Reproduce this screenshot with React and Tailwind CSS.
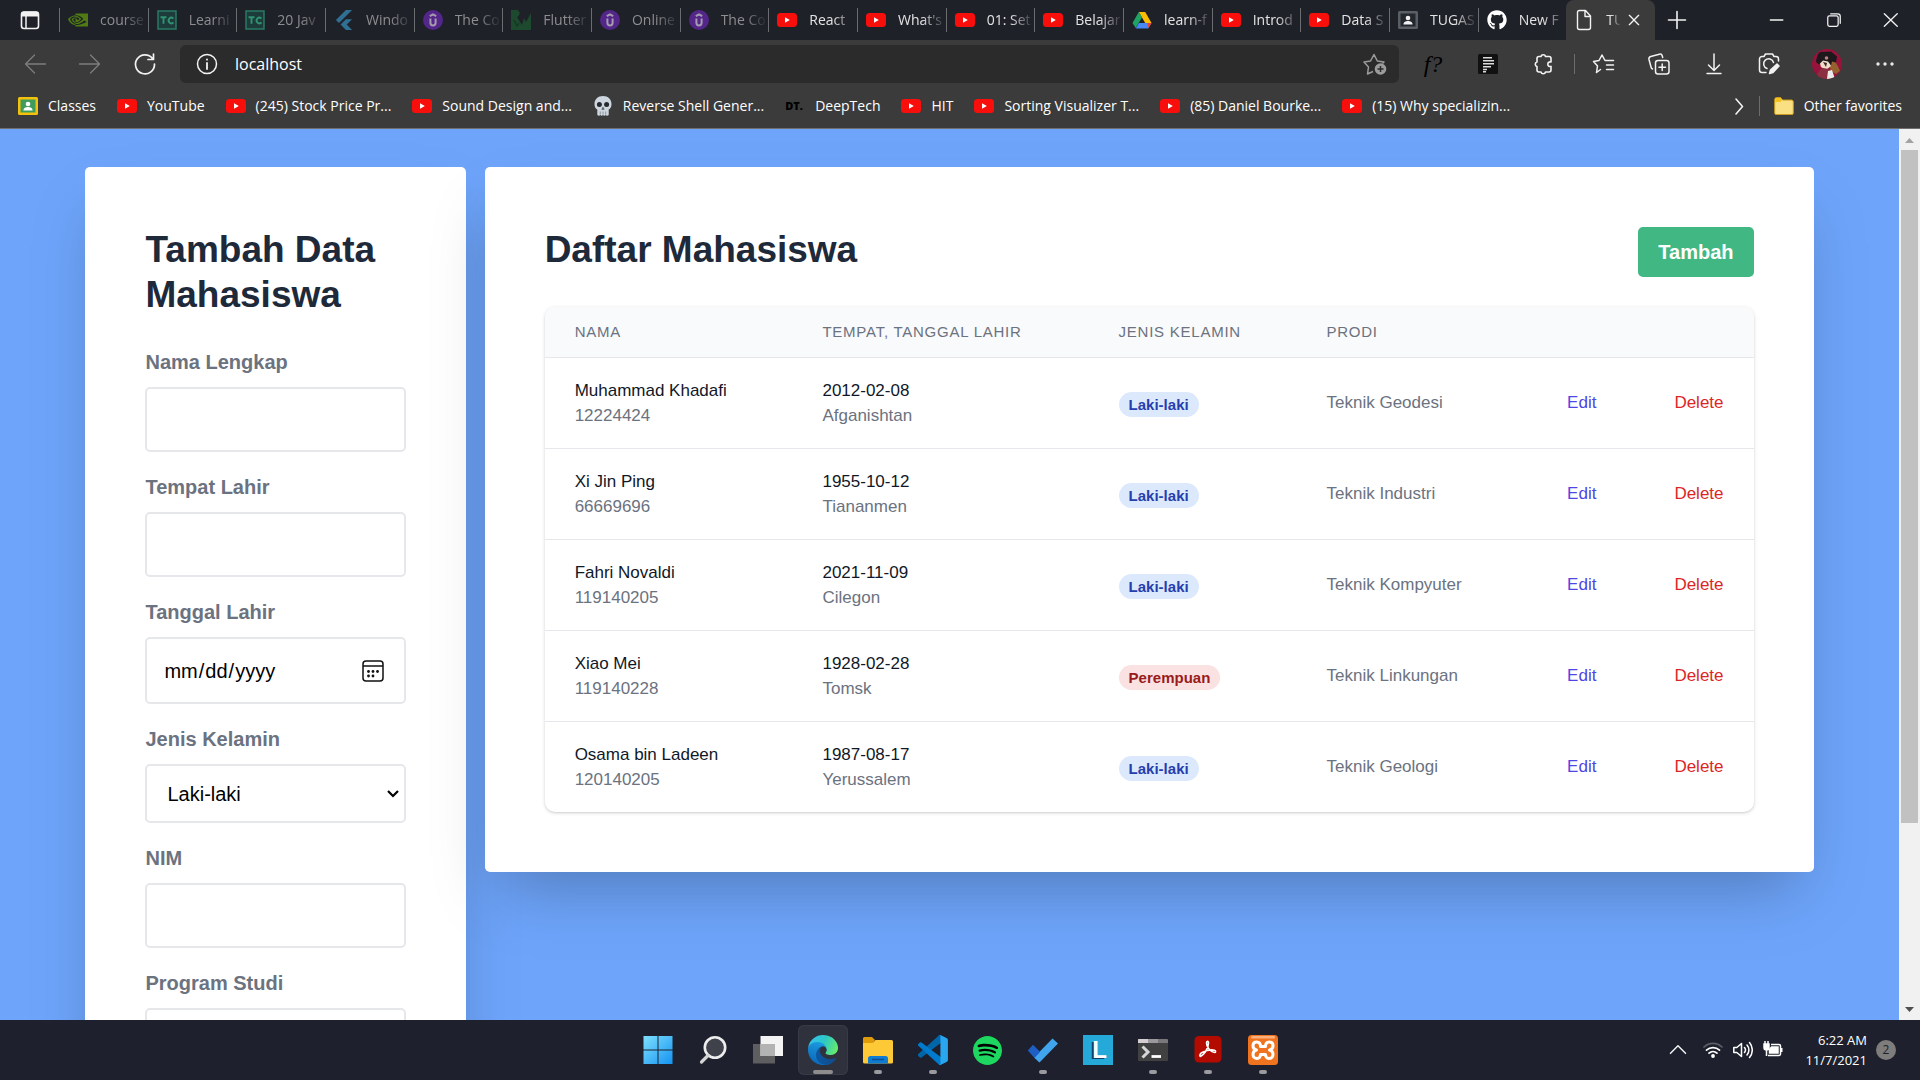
import React from "react";
import { SiNvidia, SiFlutter, SiSpotify } from "react-icons/si";
import { FaGithub } from "react-icons/fa";

/* ---------- small drawings ---------- */

const YouTube = () => (
  <svg viewBox="0 0 20 20" className="size-5 shrink-0">
    <rect x="0" y="3" width="20" height="14" rx="3.5" fill="#f80f0b" />
    <path d="M8 7.2v5.6l4.8-2.8z" fill="#fff" />
  </svg>
);

const TechCourse = () => (
  <svg viewBox="0 0 20 20" className="size-5 shrink-0">
    <rect x="1" y="1" width="18" height="18" fill="#1d3b3a" stroke="#2b8069" strokeWidth="1.4" />
    <path d="M3.5 7.2h6M6.5 7.2v6.6M16.3 8.6a2.6 3 0 1 0 0 3.8" fill="none" stroke="#2f9473" strokeWidth="1.9" />
  </svg>
);

const Udemy = () => (
  <svg viewBox="0 0 20 20" className="size-5 shrink-0">
    <circle cx="10" cy="10" r="10" fill="#54268a" />
    <path d="M6.8 6.2 10 4.3l3.2 1.9M7.4 8.6v4.2a2.6 2.6 0 0 0 5.2 0V8.6" fill="none" stroke="#a39cad" strokeWidth="2" />
  </svg>
);

const Kodeco = () => (
  <svg viewBox="0 0 20 20" className="size-5 shrink-0">
    <path d="M0 0h6c4 1 3 6 0 7l5 8 2-7 2 4 5-9v17H0z" fill="#1d4a2e" />
    <path d="M3 10l3 6 2-3" fill="none" stroke="#173823" strokeWidth="1.4" />
  </svg>
);

const Drive = () => (
  <svg viewBox="0 0 20 18" className="size-5 shrink-0">
    <path d="M6.8 1h6.4l6.3 11h-6.3z" fill="#fbbc04" />
    <path d="M6.8 1 10 6.6 3.7 17 .5 12z" fill="#1ea362" />
    <path d="M6.9 12h12.6l-3.2 5.4H3.7z" fill="#4688f4" />
    <path d="M15 12h4.5l-3 5z" fill="#ea4335" />
  </svg>
);

const Person = ({ frame, back, body }) => (
  <svg viewBox="0 0 20 20" className="size-5 shrink-0">
    <rect x="0" y="1" width="20" height="18" rx="1.5" fill={frame} />
    <rect x="2.5" y="3.5" width="15" height="13" fill={back} />
    <circle cx="10" cy="8" r="2.3" fill={body} />
    <path d="M5.4 14.6c0-2.6 2.4-3.6 4.6-3.6s4.6 1 4.6 3.6z" fill={body} />
  </svg>
);

const Skull = () => (
  <svg viewBox="0 0 20 20" className="size-5 shrink-0">
    <path d="M10 0C4.8 0 1.5 3.4 1.5 8c0 3 1 4.6 2.8 5.6V19c1 1 2.3 1 3 0 .8 1 1.9 1 2.7 0 .8 1 1.9 1 2.7 0 .7 1 2 1 3 0v-5.4c1.800-1 2.800-2.600 2.800-5.600C18.5 3.4 15.2 0 10 0z" fill="#cdd6de" />
    <circle cx="6.4" cy="8.6" r="2.5" fill="#26292e" />
    <circle cx="13.6" cy="8.6" r="2.5" fill="#26292e" />
    <path d="M10 11l-1.2 2.5h2.4zM7.3 15.5v3M10 15.5v3M12.7 15.5v3" fill="#26292e" stroke="#6d757d" strokeWidth=".7" />
  </svg>
);

const Folder = () => (
  <svg viewBox="0 0 20 20" className="size-5 shrink-0">
    <path d="M.7 3.5A2 2 0 0 1 2.7 1.500h3.8l2 2.5h9a1.8 1.8 0 0 1 1.8 1.8v11.4a1.3 1.3 0 0 1-1.3 1.3H2a1.3 1.3 0 0 1-1.3-1.3z" fill="#fbe083" stroke="#c99a1b" strokeWidth="1" />
    <path d="M1.2 3.5a1.5 1.5 0 0 1 1.5-1.5h3.6l1.7 2-1.7 2H1.2z" fill="#f3c31c" />
  </svg>
);

const Line = ({ children, size = "size-6", color = "#f2f2f2", w = 1.3 }) => (
  <svg viewBox="0 0 24 24" className={`${size} shrink-0`} fill="none" stroke={color} strokeWidth={w} strokeLinecap="round" strokeLinejoin="round">
    {children}
  </svg>
);

/* ---------- browser: tab strip ---------- */

const tabs = [
  { t: "course", icon: <SiNvidia className="size-5 shrink-0 text-[#4f7a14]" />, asleep: true },
  { t: "Learni", icon: <TechCourse />, asleep: true },
  { t: "20 Jav", icon: <TechCourse />, asleep: true },
  { t: "Windo", icon: <SiFlutter className="size-5 shrink-0 text-[#2f6f93]" />, asleep: true },
  { t: "The Co", icon: <Udemy />, asleep: true },
  { t: "Flutter", icon: <Kodeco />, asleep: true },
  { t: "Online", icon: <Udemy />, asleep: true },
  { t: "The Co", icon: <Udemy />, asleep: true },
  { t: "React", icon: <YouTube /> },
  { t: "What's", icon: <YouTube /> },
  { t: "01: Set", icon: <YouTube /> },
  { t: "Belajar", icon: <YouTube /> },
  { t: "learn-f", icon: <Drive /> },
  { t: "Introd", icon: <YouTube /> },
  { t: "Data S", icon: <YouTube /> },
  { t: "TUGAS", icon: <Person frame="#5a5f66" back="#23272e" body="#f0f0f0" /> },
  { t: "New F", icon: <FaGithub className="size-5 shrink-0 text-white" /> },
];

function TabStrip() {
  return (
    <div className="flex h-10 shrink-0 items-center bg-[#1e2128] text-[14px] leading-5 text-[#e4e4e4]">
      <button aria-label="Tab actions" className="flex w-[59px] shrink-0 justify-center">
        <svg viewBox="0 0 20 20" className="size-5">
          <rect x="1.5" y="2" width="17" height="16.5" rx="2.5" fill="none" stroke="#f2f2f2" strokeWidth="1.6" />
          <path d="M1.5 4a2.5 2 0 0 1 2.5-2.5h12a2.5 2 0 0 1 2.5 2.5v2.5h-17z" fill="#f2f2f2" />
          <path d="M6 6v12" stroke="#f2f2f2" strokeWidth="1.5" />
        </svg>
      </button>
      <div role="tablist" className="grid h-full min-w-0 flex-[1596] grid-cols-18 items-center">
        {tabs.map((tab, i) => (
          <button role="tab" key={i} className="flex h-6 min-w-0 items-center gap-3 border-l border-[#6a6c70] pl-2">
            {tab.icon}
            <span
              className={`min-w-0 flex-1 overflow-hidden text-left whitespace-nowrap [mask-image:linear-gradient(to_right,black_50%,transparent)] ${
                tab.asleep ? "text-[#8d8e90]" : ""
              }`}
            >
              {tab.t}
            </span>
          </button>
        ))}
        <div role="tab" aria-selected="true" className="flex h-full min-w-0 items-center rounded-t-lg bg-[#3b3b3b] pl-1.5">
          <Line size="size-6" w={1.4}>
            <path d="M5.5 4.5a2 2 0 0 1 2-2h6l5 5.5v11.5a2 2 0 0 1-2 2h-9a2 2 0 0 1-2-2zM13 2.5v6h5.5" />
          </Line>
          <span className="ml-2.5 w-5 overflow-hidden [mask-image:linear-gradient(to_right,black_25%,transparent_75%)]">TU</span>
          <button aria-label="Close tab">
            <Line size="size-4" w={2}><path d="M5 5l14 14M19 5 5 19" /></Line>
          </button>
        </div>
      </div>
      <div className="flex min-w-0 flex-[265] items-center">
        <button aria-label="New tab" className="ml-2.5">
          <Line size="size-6" w={1.6}><path d="M3.5 12h17M12 3.5v17" /></Line>
        </button>
        <div className="ml-auto flex items-center gap-[37px] pr-[19px]">
          <button aria-label="Minimize"><Line size="size-5" w={1.6}><path d="M4 12h15" /></Line></button>
          <button aria-label="Restore">
            <Line size="size-5" w={1.5}>
              <rect x="4.5" y="7" width="12.5" height="12.5" rx="2" />
              <path d="M8 4.5h8.5a3 3 0 0 1 3 3V16" />
            </Line>
          </button>
          <button aria-label="Close"><Line size="size-5" w={1.6}><path d="M4 4.5l15.5 15M19.5 4.5 4 19.5" /></Line></button>
        </div>
      </div>
    </div>
  );
}

/* ---------- browser: address row ---------- */

function Avatar() {
  return (
    <svg viewBox="0 0 30 30" className="size-[30px]">
      <defs><clipPath id="face"><circle cx="15" cy="15" r="15" /></clipPath></defs>
      <g clipPath="url(#face)">
        <rect width="30" height="30" fill="#97133c" />
        <path d="M19 10c4 1 6 5 9 12l-4 3-5-3-3-9z" fill="#96602f" />
        <path d="M7 11l10-1 2 7-5 4-5-3z" fill="#f1dccb" />
        <path d="M4 13C5 6 7 2 11 3l8-.5 6 5-1 6-4-1-1 4-3-4-5-1-4 4z" fill="#1c181c" />
        <path d="M11 13l4 1-1 4z" fill="#3a2826" />
        <circle cx="14.5" cy="9" r="1.800" fill="#c08087" />
        <path d="M5 30c0-6 2-9 6-11l6 1 4 10z" fill="#8a3040" />
        <path d="M16 22l4-1 3 9h-8z" fill="#ecebea" />
      </g>
    </svg>
  );
}

function AddressRow() {
  return (
    <div className="flex h-12 items-center">
      <div className="flex w-[180px] shrink-0 items-center gap-[31px] pl-[23px]">
        <button aria-label="Back"><Line color="#7d7d7d"><path d="M2.5 12h20M11.5 3 2.5 12l9 9" /></Line></button>
        <button aria-label="Forward"><Line color="#7d7d7d"><path d="M1.5 12h20M12.5 3l9 9-9 9" /></Line></button>
        <button aria-label="Reload"><Line w={1.7}><path d="M19.5 6.5A9.5 9.5 0 1 0 21.5 12M20.5 2v5.5H15" /></Line></button>
      </div>
      <div className="flex h-[38px] min-w-0 flex-1 items-center rounded-md bg-[#2b2b2b] pr-3 pl-[15px]">
        <Line w={1.5}><circle cx="12" cy="12" r="9.5" /><path d="M12 11v6M12 7.3v.4" strokeWidth="1.8" /></Line>
        <input
          aria-label="Address"
          defaultValue="localhost"
          className="ml-4 min-w-0 flex-1 bg-transparent text-[16px] leading-6 text-white outline-none"
        />
        <button aria-label="Add to favorites">
          <svg viewBox="0 0 24 24" className="size-6" fill="none" stroke="#9b9b9b" strokeWidth="1.5" strokeLinejoin="round">
            <path d="M10 19.5l-5.500 2.500 1-7L1 10l6.500-1L11 2.500l3.300 6.500 6.700 1-1.500 1.500" />
            <circle cx="17.5" cy="17" r="5.800" fill="#9b9b9b" stroke="none" />
            <path d="M17.5 14v6M14.5 17h6" stroke="#2b2b2b" />
          </svg>
        </button>
      </div>
      <div className="flex shrink-0 items-center gap-[31px] pr-[23px] pl-[22px]">
        <button aria-label="Font finder" className="w-6 text-center font-['Liberation_Serif',serif] text-[24px] leading-6 text-black italic">f?</button>
        <button aria-label="Reader">
          <svg viewBox="0 0 24 24" className="size-6">
            <rect x="2" y="2" width="20" height="20" rx="1.5" fill="#111" />
            <path d="M7 5.800h9M7 8.800h11M7 11.800h11M7 14.800h8M7 17.500h4M7 19.800h3" stroke="#dcdcdc" strokeWidth="1.4" />
          </svg>
        </button>
        <button aria-label="Extensions">
          <Line w={1.6}>
            <path d="M10 4.500a2.300 2.300 0 0 1 4.500 0h3.500a2 2 0 0 1 2 2V10c-1.500-.5-3.200.3-3.200 2.200s1.700 2.700 3.200 2.200v3.600a2 2 0 0 1-2 2h-3.500a2.300 2.300 0 0 1-4.500 0H8a2 2 0 0 1-2-2v-3.500a2.400 2.400 0 0 1 0-4.600V6.500a2 2 0 0 1 2-2z" />
          </Line>
        </button>
        <div className="-ml-3 flex items-center gap-[17px]">
          <span className="h-5 w-px bg-[#6d6d6d]" />
          <button aria-label="Favorites">
            <Line w={1.5}><path d="M8.5 17.5 4.5 20.5l1-6.5L1.5 9.500l5.5-1L10 3l3 5.500h8.500M14.500 13h7M14.500 17.500h7" /></Line>
          </button>
        </div>
        <button aria-label="Collections">
          <Line w={1.5}>
            <rect x="8.5" y="8.5" width="13.500" height="13.500" rx="2.5" />
            <path d="M15.200 12v6.500M12 15.200h6.500M5.500 17a3 3 0 0 1-1.500-2L2 7.500a2.500 2.500 0 0 1 1.800-3l8.500-2.300a2.500 2.500 0 0 1 3 1.800l.4 1.500" />
          </Line>
        </button>
        <button aria-label="Downloads"><Line w={1.5}><path d="M12 2v16M6.5 13l5.5 5.500 5.500-5.500M5 21.500h14" /></Line></button>
        <button aria-label="Web capture">
          <Line w={1.5}>
            <path d="M21.5 9V7a2.500 2.500 0 0 0-2.500-2.500h-2L15.500 2h-7L7 4.500H5A2.500 2.500 0 0 0 2.500 7v11A2.500 2.500 0 0 0 5 20.500h4" />
            <path d="M10 16.500A5 5 0 1 1 16.500 10.500" />
            <path d="M12.500 21.500l1-3.500 6.500-6 2 2-6 6.500z" fill="#f2f2f2" />
          </Line>
        </button>
        <button aria-label="Profile"><Avatar /></button>
        <button aria-label="Settings and more">
          <svg viewBox="0 0 24 24" className="size-6" fill="#e8e8e8"><circle cx="5" cy="12" r="1.7" /><circle cx="12" cy="12" r="1.7" /><circle cx="19" cy="12" r="1.7" /></svg>
        </button>
      </div>
    </div>
  );
}

/* ---------- browser: bookmarks ---------- */

const bookmarks = [
  ["Classes", <Person frame="#f4c20d" back="#3f9c5a" body="#fff" />],
  ["YouTube", <YouTube />],
  ["(245) Stock Price Pr...", <YouTube />],
  ["Sound Design and...", <YouTube />],
  ["Reverse Shell Gener...", <Skull />],
  ["DeepTech", <span className="w-5 text-[11px] font-black text-black">DT.</span>],
  ["HIT", <YouTube />],
  ["Sorting Visualizer T...", <YouTube />],
  ["(85) Daniel Bourke...", <YouTube />],
  ["(15) Why specializin...", <YouTube />],
];

function BookmarkBar() {
  return (
    <nav aria-label="Favorites bar" className="flex h-10 items-center px-[18px] pb-1 text-[14px] leading-5 text-white">
      <div className="flex min-w-0 flex-1 items-center gap-[21px] overflow-hidden">
        {bookmarks.map(([label, icon]) => (
          <a key={label} href="#" className="flex shrink-0 items-center gap-2.5 whitespace-nowrap">
            {icon}
            {label}
          </a>
        ))}
      </div>
      <button aria-label="More favorites" className="mr-2"><Line w={1.6}><path d="M9 5l6.500 7.500L9 20" /></Line></button>
      <a href="#" className="flex shrink-0 items-center gap-2.5 whitespace-nowrap">
        <span className="mr-1 h-5 w-px bg-[#6d6d6d]" />
        <Folder />
        Other favorites
      </a>
    </nav>
  );
}

/* ---------- page ---------- */

const fieldBox = "block w-full rounded-[5px] border-2 border-gray-200 bg-white px-4 text-[20px] leading-[30px] text-black";

function Field({ id, label, children }) {
  return (
    <div className="mb-5">
      <label htmlFor={id} className="mb-2.5 block text-[20px] leading-[30px] font-bold text-[#6b7280]">{label}</label>
      {children}
    </div>
  );
}

function SelectBox({ id, options }) {
  return (
    <div className="relative">
      <select id={id} className={`${fieldBox} h-[59px] appearance-none pl-5`}>
        {options.map((o) => <option key={o}>{o}</option>)}
      </select>
      <svg viewBox="0 0 12 8" className="pointer-events-none absolute top-1/2 right-[7px] h-2 w-3 -translate-y-1/2" fill="none" stroke="#000" strokeWidth="2.2">
        <path d="M1 1l5 5 5-5" />
      </svg>
    </div>
  );
}

function StudentForm() {
  return (
    <form className="w-[22%] shrink-0 rounded-[5px] bg-white p-15 shadow-[0_31px_62px_-15px_rgba(0,0,0,0.25)]">
      <h2 className="mb-[30px] text-[37px] leading-[45px] font-bold text-gray-800">Tambah Data Mahasiswa</h2>
      <Field id="nama" label="Nama Lengkap"><input id="nama" className={`${fieldBox} h-[65px]`} /></Field>
      <Field id="tempat" label="Tempat Lahir"><input id="tempat" className={`${fieldBox} h-[65px]`} /></Field>
      <Field id="tanggal" label="Tanggal Lahir">
        <div className="relative">
          <input id="tanggal" type="date" className={`${fieldBox} h-[67px] [&::-webkit-calendar-picker-indicator]:opacity-0`} />
          <svg viewBox="0 0 22 22" className="pointer-events-none absolute top-1/2 right-[22px] size-[22px] -translate-y-1/2" fill="none" stroke="#111" strokeWidth="1.5">
            <rect x="1" y="1" width="20" height="20" rx="3" />
            <path d="M1 6h20" />
            <g fill="#111" stroke="none">
              <circle cx="6.5" cy="11.5" r="1.4" /><circle cx="11" cy="11.5" r="1.4" /><circle cx="15.5" cy="11.5" r="1.4" />
              <circle cx="6.5" cy="16" r="1.4" /><circle cx="11" cy="16" r="1.4" />
            </g>
          </svg>
        </div>
      </Field>
      <Field id="kelamin" label="Jenis Kelamin"><SelectBox id="kelamin" options={["Laki-laki", "Perempuan"]} /></Field>
      <Field id="nim" label="NIM"><input id="nim" className={`${fieldBox} h-[65px]`} /></Field>
      <Field id="prodi" label="Program Studi"><input id="prodi" className={`${fieldBox} h-[65px]`} /></Field>
    </form>
  );
}

const students = [
  ["Muhammad Khadafi", "12224424", "2012-02-08", "Afganishtan", "Laki-laki", "Teknik Geodesi"],
  ["Xi Jin Ping", "66669696", "1955-10-12", "Tiananmen", "Laki-laki", "Teknik Industri"],
  ["Fahri Novaldi", "119140205", "2021-11-09", "Cilegon", "Laki-laki", "Teknik Kompyuter"],
  ["Xiao Mei", "119140228", "1928-02-28", "Tomsk", "Perempuan", "Teknik Linkungan"],
  ["Osama bin Ladeen", "120140205", "1987-08-17", "Yerussalem", "Laki-laki", "Teknik Geologi"],
];

function StudentList() {
  return (
    <section className="min-w-0 flex-1 rounded-[5px] bg-white p-15 shadow-[0_31px_62px_-15px_rgba(0,0,0,0.25)]">
      <div className="mb-[30px] flex items-start justify-between">
        <h2 className="text-[37px] leading-[45px] font-bold text-gray-800">Daftar Mahasiswa</h2>
        <button className="h-[50px] rounded-[5px] bg-[#41b883] px-5 text-[20px] leading-[30px] font-bold text-white">Tambah</button>
      </div>
      <div className="overflow-hidden rounded-[10px] shadow-[0_1px_4px_rgba(0,0,0,0.12),0_1px_2px_rgba(0,0,0,0.1)]">
        <table className="w-full table-fixed border-collapse text-left text-[17px] leading-[25px] text-[#6b7280]">
          <thead className="bg-gray-50 text-[15px] tracking-wider">
            <tr>
              <th scope="col" className="h-[50px] w-[20.5%] pl-[30px] font-normal">NAMA</th>
              <th scope="col" className="w-[24.5%] pl-[30px] font-normal">TEMPAT, TANGGAL LAHIR</th>
              <th scope="col" className="w-[17.2%] pl-[30px] font-normal">JENIS KELAMIN</th>
              <th scope="col" className="w-[19.9%] pl-[30px] font-normal">PRODI</th>
              <th scope="col" className="w-[9%]"><span className="sr-only">Edit</span></th>
              <th scope="col" className="w-[8.9%]"><span className="sr-only">Delete</span></th>
            </tr>
          </thead>
          <tbody>
            {students.map(([name, nim, date, place, sex, prodi]) => (
              <tr key={nim} className="border-t border-gray-200">
                <td className="py-5 pl-[30px]">
                  <div className="text-gray-900">{name}</div>
                  <div>{nim}</div>
                </td>
                <td className="py-5 pl-[30px]">
                  <div className="text-gray-900">{date}</div>
                  <div>{place}</div>
                </td>
                <td className="pt-1 pl-[30px]">
                  <span
                    className={`inline-flex rounded-full px-2.5 text-[15px] leading-[25px] font-bold ${
                      sex === "Perempuan" ? "bg-[#fae1e2] text-[#991b1b]" : "bg-[#dce9fd] text-[#263fad]"
                    }`}
                  >
                    {sex}
                  </span>
                </td>
                <td className="pl-[30px]">{prodi}</td>
                <td className="pl-[30px]"><a href="#" className="text-[#4f46e5]">Edit</a></td>
                <td className="pr-[30px] text-right"><a href="#" className="text-[#dc2626]">Delete</a></td>
              </tr>
            ))}
          </tbody>
        </table>
      </div>
    </section>
  );
}

function Scrollbar() {
  return (
    <div aria-hidden="true" className="flex w-[21px] shrink-0 flex-col items-center bg-[#f1f1f1]">
      <svg viewBox="0 0 21 21" className="size-[21px] shrink-0"><path d="M6 14l4.5-5 4.5 5z" fill="#a3a3a3" /></svg>
      <div className="w-[17px] flex-[673] bg-[#c1c1c1]" />
      <div className="flex-[176]" />
      <svg viewBox="0 0 21 21" className="size-[21px] shrink-0"><path d="M6 8l4.5 5 4.5-5z" fill="#505050" /></svg>
    </div>
  );
}

/* ---------- taskbar ---------- */

const Big = ({ box = "0 0 30 30", children }) => <svg viewBox={box} className="size-[30px]">{children}</svg>;

const apps = [
  ["Start", "", (
    <Big>
      <defs><linearGradient id="win" x1="0" y1="0" x2="1" y2="1"><stop offset="0" stopColor="#7fe0fd" /><stop offset="1" stopColor="#1493f2" /></linearGradient></defs>
      <path d="M.5 1h14v13.5H.5zM15.5 1h14v13.5h-14zM.5 15.5h14V29H.5zM15.5 15.5h14V29h-14z" fill="url(#win)" />
    </Big>
  )],
  ["Search", "", (
    <Big><circle cx="17" cy="12.5" r="10.2" fill="#3f424b" stroke="#ededed" strokeWidth="2.6" /><path d="M10 20.5 3.5 27" stroke="#d4d4d4" strokeWidth="3.2" strokeLinecap="round" /></Big>
  )],
  ["Task view", "", (
    <Big><rect x="0" y="9" width="22" height="19.5" fill="#5e5e60" /><rect x="7.5" y="1" width="22.5" height="20" fill="#f3f3f3" /><rect x="7.5" y="9" width="14.5" height="12" fill="#b3b3b3" /></Big>
  )],
  ["Microsoft Edge", "active", (
    <Big box="0 0 256 256">
      <defs>
        <linearGradient id="e1" x1="0" y1="0" x2="1" y2="0"><stop offset="0" stopColor="#0c59a4" /><stop offset="1" stopColor="#114a8b" /></linearGradient>
        <linearGradient id="e2" x1=".6" y1="0" x2=".3" y2="1"><stop offset="0" stopColor="#1b9de2" /><stop offset="1" stopColor="#0b66b8" /></linearGradient>
        <linearGradient id="e3" x1="0" y1=".3" x2="1" y2=".6"><stop offset="0" stopColor="#35c1f1" /><stop offset=".5" stopColor="#2cc7c5" /><stop offset="1" stopColor="#66eb6e" /></linearGradient>
      </defs>
      <path d="M235.68 195.46a93.73 93.73 0 01-10.54 4.71 101.87 101.87 0 01-35.9 6.46c-47.32 0-88.54-32.55-88.54-74.32A31.48 31.48 0 01117.13 105c-42.8 1.8-53.8 46.4-53.8 72.53 0 73.88 68.09 81.37 82.76 81.37 7.91 0 19.84-2.3 27-4.56l1.31-.44a128.34 128.34 0 0066.6-52.8 4 4 0 00-5.32-5.64z" fill="url(#e1)" />
      <path d="M105.73 241.42a79.2 79.2 0 01-22.74-21.34 80.72 80.72 0 0129.53-120c3.12-1.47 8.45-4.13 15.54-4a32.35 32.35 0 0125.69 13 31.88 31.88 0 016.36 18.66c0-.21 24.46-79.6-80-79.6-43.9 0-80 41.66-80 78.21a130.15 130.15 0 0012.11 56 128 128 0 00156.38 67.11 75.55 75.55 0 01-62.78-8z" fill="url(#e2)" />
      <path d="M152.33 148.86c-.81 1.05-3.3 2.5-3.3 5.66 0 2.61 1.7 5.12 4.72 7.23 14.38 10 41.49 8.68 41.56 8.68a59.56 59.56 0 0030.27-8.35 61.38 61.38 0 0030.43-52.88c.26-22.41-8-37.31-11.34-43.91C223.46 23.84 177.72 0 128.02 0a128 128 0 00-128 126.2c.48-36.54 36.8-66.05 80-66.05 3.5 0 23.46.34 42 10.07 16.34 8.58 24.9 18.94 30.85 29.21 6.18 10.67 7.28 24.15 7.28 29.52 0 5.37-2.74 13.33-7.82 19.91z" fill="url(#e3)" />
    </Big>
  )],
  ["File Explorer", "open", (
    <Big>
      <path d="M0 3.5A1.5 1.5 0 0 1 1.5 2H9l3 3-3 4H0z" fill="#e09b0b" />
      <path d="M0 8h9.500L12.500 5h16A1.500 1.500 0 0 1 30 6.500v20.500a1.500 1.500 0 0 1-1.500 1.500h-27A1.500 1.500 0 0 1 0 27z" fill="#fdc937" />
      <path d="M5 28.5V23.500a2.500 2.500 0 0 1 2.500-2.500h15a2.500 2.500 0 0 1 2.500 2.500v5z" fill="#0f7cd4" />
      <path d="M9 24.5h12" stroke="#0b4f93" strokeWidth="1.5" />
    </Big>
  )],
  ["Visual Studio Code", "open", (
    <Big box="0 0 256 254">
      <path d="M246.135 26.873L193.409 1.486a15.94 15.94 0 00-18.19 3.09L2.605 161.96a10.662 10.662 0 00.012 15.766l14.1 12.818a10.66 10.66 0 0013.612.605L238.199 33.436c6.979-5.294 17.002-.317 17.002 8.442v-.613a16 16 0 00-9.066-14.392z" fill="#0065a9" />
      <path d="M246.135 226.816l-52.726 25.387a15.94 15.94 0 01-18.19-3.09L2.605 91.73a10.663 10.663 0 01.012-15.766l14.1-12.818a10.66 10.66 0 0113.612-.605l207.87 157.7c6.979 5.294 17.002.318 17.002-8.442v.613a16 16 0 01-9.066 14.403z" fill="#007acc" />
      <path d="M193.428 252.134a15.954 15.954 0 01-18.209-3.09c5.906 5.905 16.003 1.722 16.003-6.629V11.273c0-8.351-10.097-12.534-16.003-6.629a15.954 15.954 0 0118.21-3.09l52.697 25.35A16 16 0 01255.25 41.32v171.06a16 16 0 01-9.125 14.416l-52.697 25.338z" fill="#29a6ee" />
    </Big>
  )],
  ["Spotify", "", <span className="flex size-[29px] items-center justify-center rounded-full bg-black"><SiSpotify className="size-[29px] text-[#1ed760]" /></span>],
  ["To Do", "open", (
    <Big><path d="M0 15.5 5 10l7 7-1 10z" fill="#185abd" /><path d="M6 22.500 24.500 3.500 30 8.500 11.500 27.500z" fill="#41a5ee" /><path d="M0 15.500 5 10l7 7-5.500 6z" fill="#1e5fc4" /></Big>
  )],
  ["L", "", (
    <span className="flex size-[30px] items-center justify-center bg-[#25a9d8] pl-1 font-['Liberation_Sans',Arial,sans-serif] text-[24px] leading-[30px] font-bold text-white [text-shadow:-2px_1px_0_#12406b]">L</span>
  )],
  ["Terminal", "open", (
    <Big>
      <path d="M0 5a1 1 0 0 1 1-1h28a1 1 0 0 1 1 1v3H0z" fill="#7a787b" /><path d="M0 5a1 1 0 0 1 1-1h19v4H0z" fill="#9c999c" /><path d="M0 5a1 1 0 0 1 1-1h9v4H0z" fill="#d4cdd2" />
      <path d="M0 8h30v17a1 1 0 0 1-1 1H1a1 1 0 0 1-1-1z" fill="#414141" />
      <path d="M4.5 11.5 10 17l-5.500 5.500" fill="none" stroke="#d6d6d6" strokeWidth="3" /><path d="M13.500 21.500H23" stroke="#fff" strokeWidth="2.8" />
    </Big>
  )],
  ["Acrobat", "open", (
    <Big>
      <rect x="1.5" y="1" width="27" height="26.5" rx="4.5" fill="#b30b00" />
      <path d="M7.5 21.5c2.5-1 8-7 8-13.500 0-2.500-2-2.300-2 0 0 4 4 9 8 9.500 1.500 0 1.500-2 0-2.300-4-.8-9.500.8-12.500 2.300-2.500 1.300-2.500 4-1.500 4z" fill="none" stroke="#fff" strokeWidth="1.6" />
    </Big>
  )],
  ["XAMPP", "open", (
    <Big>
      <rect x="0" y="0" width="30" height="30" rx="3.5" fill="#f0731f" /><rect x="3" y="1" width="24" height="2.500" rx="1.200" fill="#f8b07c" />
      <path d="M12.500 11.500C12.500 8.500 11 7 8.800 7S5 8.500 5 10.800 6.500 14.500 8.500 15C6.500 15.500 5 17 5 19.500S6.800 23.500 9 23.500s3.500-2 3.500-4h5c0 2 1.300 4 3.500 4s4-1.500 4-4-1.500-4-3.500-4.500c2-.5 3.500-1.900 3.500-4.200S23.400 7 21.200 7s-3.700 1.500-3.700 4.500z" fill="none" stroke="#fff" strokeWidth="3" strokeLinejoin="round" />
    </Big>
  )],
];

function Taskbar() {
  return (
    <footer className="grid h-[60px] shrink-0 grid-cols-[1fr_auto_1fr] items-center bg-[#1e212d]">
      <span />
      <div className="flex gap-[5px]">
        {apps.map(([name, state, icon]) => (
          <button
            key={name}
            aria-label={name}
            className={`relative flex size-[50px] items-center justify-center rounded-md ${state === "active" ? "bg-[#2f323d] ring-1 ring-[#383b46] ring-inset" : ""}`}
          >
            {icon}
            {state === "active" && <span className="absolute bottom-px h-1 w-5 rounded-full bg-[#8e8c8c]" />}
            {state === "open" && <span className="absolute bottom-px h-1 w-2 rounded-full bg-[#9b9b9f]" />}
          </button>
        ))}
      </div>
      <div className="flex items-center justify-end pr-6 text-white">
        <button aria-label="Hidden icons" className="mr-[15px]"><Line size="size-5" w={1.8}><path d="M3 16l9-9 9 9" /></Line></button>
        <button aria-label="Network, sound and battery" className="flex gap-2.5">
          <svg viewBox="0 0 20 20" className="size-5" fill="none" strokeWidth="1.7" strokeLinecap="round">
            <path d="M1 7a13 13 0 0 1 18 0" stroke="#5d5f68" />
            <path d="M3.5 10.2a9.5 9.5 0 0 1 13 0M6 13.2a6 6 0 0 1 8 0" stroke="#fff" />
            <circle cx="10" cy="16" r="1.9" fill="#fff" />
          </svg>
          <svg viewBox="0 0 20 20" className="size-5" fill="none" stroke="#fff" strokeWidth="1.5" strokeLinecap="round" strokeLinejoin="round">
            <path d="M.8 7.5h3l4.700-4v13l-4.700-4h-3zM11.500 7.500a4 4 0 0 1 0 5M14 5a7.500 7.500 0 0 1 0 10M16.500 2.500a11.500 11.500 0 0 1 0 15" />
          </svg>
          <svg viewBox="0 0 20 20" className="size-5" fill="none" stroke="#fff" strokeWidth="1.5">
            <path d="M8 4.5h8a1.500 1.500 0 0 1 1.500 1.500v8a1.500 1.500 0 0 1-1.500 1.500H5" /><path d="M18.500 8v4" strokeWidth="2" />
            <path d="M8.500 7h6.500v6H6.500V9.500z" fill="#fff" /><path d="M1 4h5v3.500a2.500 2.500 0 0 1-5 0zM2 4V1M5 4V1M3.500 10v6" fill="#fff" />
          </svg>
        </button>
        <div className="ml-[22px] flex flex-col items-end text-[13px] leading-5 whitespace-nowrap">
          <span>6:22 AM</span>
          <span>11/7/2021</span>
        </div>
        <span className="ml-[9px] flex size-5 items-center justify-center rounded-full bg-[#7e7d7b] text-[12px] text-[#1e212d]">2</span>
      </div>
    </footer>
  );
}

export default function App() {
  return (
    <div className="flex h-screen flex-col overflow-hidden font-['Open_Sans',sans-serif]">
      <header className="shrink-0 border-b border-[#6f6f6f] bg-[#3b3b3b]">
        <TabStrip />
        <AddressRow />
        <BookmarkBar />
      </header>
      <div className="flex min-h-0 flex-1">
        <main className="min-w-0 flex-1 overflow-hidden bg-[#6ea5fb] pt-[38px] font-['Liberation_Sans',Arial,sans-serif]">
          <div className="mx-auto flex w-[91%] items-start gap-[19px]">
            <StudentForm />
            <StudentList />
          </div>
        </main>
        <Scrollbar />
      </div>
      <Taskbar />
    </div>
  );
}
